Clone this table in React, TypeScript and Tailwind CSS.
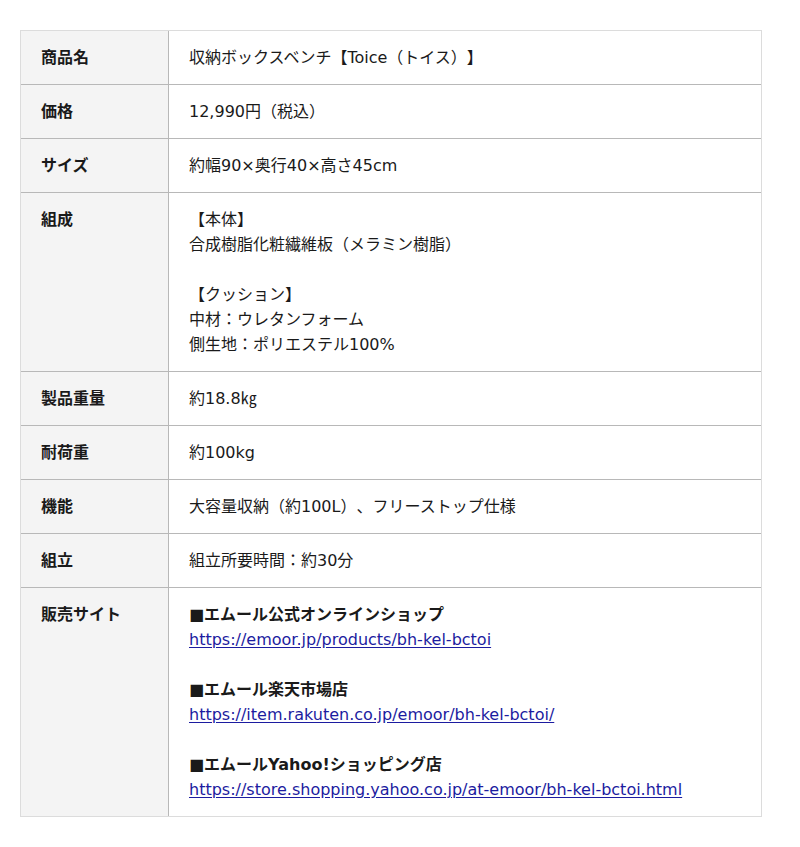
import React from 'react'

type Row = { label: string; value: React.ReactNode }

const Link = ({ href }: { href: string }) => (
  <a href={href} className="text-[#1c1ca0] underline underline-offset-2">
    {href}
  </a>
)

const ROWS: Row[] = [
  { label: '商品名', value: '収納ボックスベンチ【Toice（トイス）】' },
  { label: '価格', value: '12,990円（税込）' },
  { label: 'サイズ', value: '約幅90×奥行40×高さ45cm' },
  {
    label: '組成',
    value: (
      <>
        【本体】
        <br />
        合成樹脂化粧繊維板（メラミン樹脂）
        <br />
        <br />
        【クッション】
        <br />
        中材：ウレタンフォーム
        <br />
        側生地：ポリエステル100%
      </>
    ),
  },
  { label: '製品重量', value: '約18.8㎏' },
  { label: '耐荷重', value: '約100kg' },
  { label: '機能', value: '大容量収納（約100L）、フリーストップ仕様' },
  { label: '組立', value: '組立所要時間：約30分' },
  {
    label: '販売サイト',
    value: (
      <>
        <b>■エムール公式オンラインショップ</b>
        <br />
        <Link href="https://emoor.jp/products/bh-kel-bctoi" />
        <br />
        <br />
        <b>■エムール楽天市場店</b>
        <br />
        <Link href="https://item.rakuten.co.jp/emoor/bh-kel-bctoi/" />
        <br />
        <br />
        <b>■エムールYahoo!ショッピング店</b>
        <br />
        <Link href="https://store.shopping.yahoo.co.jp/at-emoor/bh-kel-bctoi.html" />
      </>
    ),
  },
]

export default function App() {
  return (
    <div
      className="min-h-[847px] bg-white pt-[30px] pl-[20px] text-[16px] leading-[25px] text-[#1a1a1a] [text-spacing-trim:space-all]"
      style={{ fontFamily: '"DejaVu Sans", "Noto Sans CJK JP", sans-serif' }}
    >
      <div className="w-[742px] border border-[#dcdcdc]">
        {ROWS.map((row, i) => (
          <div
            key={row.label}
            className={`grid grid-cols-[148px_1fr] ${i < ROWS.length - 1 ? 'border-b border-[#b8b8b8]' : ''}`}
          >
            <div className="bg-[#f4f4f4] border-r border-[#b8b8b8] px-5 py-[14px] font-bold">{row.label}</div>
            <div className="px-5 py-[14px]">{row.value}</div>
          </div>
        ))}
      </div>
    </div>
  )
}
